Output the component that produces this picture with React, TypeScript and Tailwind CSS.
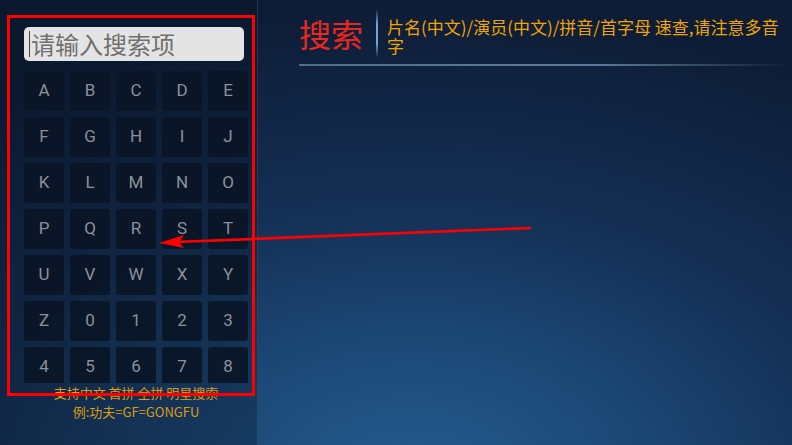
const KEYS = [
  'A', 'B', 'C', 'D', 'E',
  'F', 'G', 'H', 'I', 'J',
  'K', 'L', 'M', 'N', 'O',
  'P', 'Q', 'R', 'S', 'T',
  'U', 'V', 'W', 'X', 'Y',
  'Z', '0', '1', '2', '3',
  '4', '5', '6', '7', '8',
];

const cjk = "font-['Noto_Sans_CJK_SC','Noto_Sans',sans-serif]";

export default function App() {
  return (
    <div className="relative flex h-[445px] w-[792px] overflow-hidden bg-[radial-gradient(ellipse_95%_105%_at_52%_108%,#245c8f_0%,#1c4876_30%,#142f54_60%,#0e1d37_100%)]">
      {/* Keyboard panel */}
      <div className="flex h-full w-[258px] shrink-0 flex-col border-r border-[#3d6589]/40 bg-[#06101f]/30 pl-6 pt-[27px]">
        <div className="flex h-[34px] w-[220px] items-center rounded-[5px] bg-[#e4e4e4] pl-[5px]">
          <span className="h-[26px] w-px bg-[#444]" />
          <span className={`ml-px text-[24px] leading-none text-[#707070] ${cjk}`}>请输入搜索项</span>
        </div>

        <div className="mt-[10px] h-[312px] w-[224px] overflow-hidden">
          <div className="grid grid-cols-5 gap-[6px]">
            {KEYS.map((k) => (
              <div
                key={k}
                className="flex h-10 items-center justify-center rounded-[3px] bg-[#0a1526]/90 font-['Roboto',sans-serif] text-[17px] text-[#8a9199]"
              >
                {k}
              </div>
            ))}
          </div>
        </div>

        <div className={`w-[224px] text-center text-[13px] leading-[19px] text-[#dc9c14] ${cjk}`}>
          <div>支持中文 首拼 全拼 明星搜索</div>
          <div>例:功夫=GF=GONGFU</div>
        </div>
      </div>

      {/* Right side */}
      <div className="min-w-0 flex-1 pl-[41px] pt-[9px]">
        <div className="flex items-start">
          <div className={`shrink-0 whitespace-nowrap pt-[4px] text-[32px] leading-[40px] text-[#e8281c] ${cjk}`}>搜索</div>
          <div className="ml-[13px] h-[49px] w-[2px] shrink-0 bg-[linear-gradient(to_bottom,transparent,#6fa7d0_30%,#6fa7d0_70%,transparent)]" />
          <div className={`ml-[9px] min-w-0 pt-[8px] text-[17px] leading-[19px] text-[#f0a400] ${cjk}`}>
            片名(中文)/演员(中文)/拼音/首字母 速查,请注意多音字
          </div>
        </div>
        <div className="mt-[6px] h-[2px] w-[490px] bg-[linear-gradient(to_right,#4d6f8e,#5b7d9b_60%,transparent)]" />
      </div>

      {/* Annotation overlay */}
      <div className="pointer-events-none absolute left-[7px] top-[15px] h-[381px] w-[248px] border-[3px] border-[#ff0000]" />
      <svg className="pointer-events-none absolute left-0 top-0" width="792" height="445" viewBox="0 0 792 445">
        <line x1="530" y1="228" x2="176" y2="242" stroke="#ff0000" strokeWidth="2.6" strokeLinecap="round" />
        <polygon points="159,243 184,235 179,242.5 184,248" fill="#ff0000" />
      </svg>
    </div>
  );
}
